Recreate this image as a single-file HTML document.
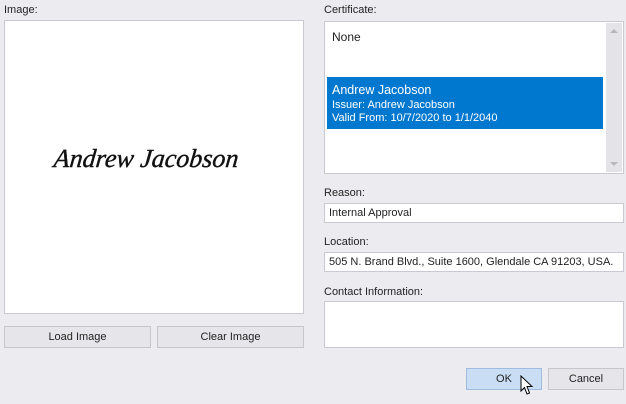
<!DOCTYPE html>
<html><head><style>
body{margin:0;width:626px;height:404px;background:#ececf0;font-family:"Liberation Sans",sans-serif;font-size:11px;color:#222;position:relative;overflow:hidden}
.a{position:absolute}
.box{position:absolute;background:#fff;border:1px solid #c9c9d2;box-sizing:border-box}
.btn{position:absolute;background:#e6e6ea;border:1px solid #c6c6cc;box-sizing:border-box;text-align:center;line-height:20px;font-size:11px}
.inp{padding-left:4px;line-height:18px;font-size:11px}
</style></head><body>
<div class="a" style="left:4px;top:4px">Image:</div>
<div class="box" style="left:4px;top:20px;width:300px;height:294px"></div>
<div class="a" style="left:54px;top:144px;font-family:'Liberation Serif',serif;font-style:italic;font-size:26px;color:#111;transform:skewX(-6deg);-webkit-text-stroke:0.4px #111">Andrew Jacobson</div>
<div class="btn" style="left:4px;top:326px;width:147px;height:22px">Load Image</div>
<div class="btn" style="left:157px;top:326px;width:147px;height:22px">Clear Image</div>

<div class="a" style="left:324px;top:4px">Certificate:</div>
<div class="box" style="left:324px;top:21px;width:300px;height:153px"></div>
<div class="a" style="left:332px;top:30px;font-size:12px">None</div>
<div class="a" style="left:327px;top:77px;width:276px;height:52px;background:#0078d0;color:#fff">
<div style="position:absolute;left:5px;top:6px;font-size:12.5px">Andrew Jacobson</div>
<div style="position:absolute;left:5px;top:22px">Issuer: Andrew Jacobson</div>
<div style="position:absolute;left:5px;top:35px">Valid From: 10/7/2020 to 1/1/2040</div>
</div>
<div class="a" style="left:606px;top:23px;width:16px;height:149px;background:#e4e4e8"></div>
<div class="a" style="left:610px;top:29px;width:0;height:0;border-left:4px solid transparent;border-right:4px solid transparent;border-bottom:4px solid #b8b8bc"></div>
<div class="a" style="left:610px;top:162px;width:0;height:0;border-left:4px solid transparent;border-right:4px solid transparent;border-top:4px solid #b8b8bc"></div>

<div class="a" style="left:324px;top:187px">Reason:</div>
<div class="box inp" style="left:324px;top:203px;width:300px;height:20px">Internal Approval</div>
<div class="a" style="left:324px;top:236px">Location:</div>
<div class="box inp" style="left:324px;top:252px;width:300px;height:20px">505 N. Brand Blvd., Suite 1600, Glendale CA 91203, USA.</div>
<div class="a" style="left:324px;top:286px">Contact Information:</div>
<div class="box" style="left:324px;top:301px;width:300px;height:47px"></div>

<div class="btn" style="left:466px;top:368px;width:76px;height:22px;background:#c9def5;border-color:#9fbbe0">OK</div>
<div class="btn" style="left:548px;top:368px;width:76px;height:22px">Cancel</div>
<svg class="a" style="left:520px;top:375px" width="14" height="22" viewBox="0 0 14 22"><path d="M1 1 L1 16 L4.5 12.5 L7 19 L9.5 18 L7 11.5 L12 11.5 Z" fill="#fff" stroke="#000" stroke-width="1"/></svg>
</body></html>
